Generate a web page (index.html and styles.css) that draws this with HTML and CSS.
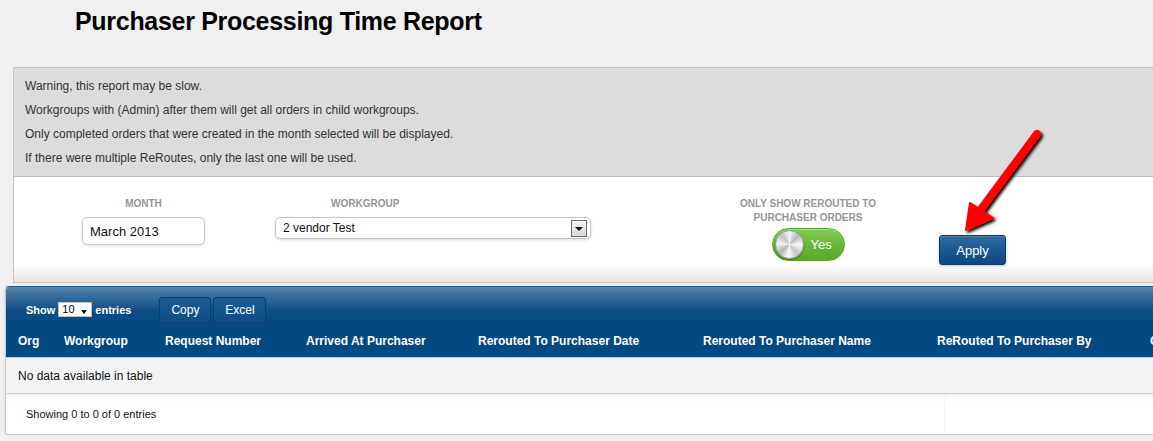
FILE: index.html
```html
<!DOCTYPE html>
<html>
<head>
<meta charset="utf-8">
<title>Purchaser Processing Time Report</title>
<link rel="stylesheet" href="styles.css">
</head>
<body>
<div class="page">
  <h1 class="title">Purchaser Processing Time Report</h1>

  <section class="filter-panel">
    <div class="notes">
      <p>Warning, this report may be slow.</p>
      <p>Workgroups with (Admin) after them will get all orders in child workgroups.</p>
      <p>Only completed orders that were created in the month selected will be displayed.</p>
      <p>If there were multiple ReRoutes, only the last one will be used.</p>
    </div>
    <div class="form-row">
      <div class="group group-month">
        <div class="label">MONTH</div>
        <div class="text-input">March 2013</div>
      </div>
      <div class="group group-workgroup">
        <div class="label">WORKGROUP</div>
        <div class="select-input">
          <span>2 vendor Test</span>
          <span class="select-btn"><span class="tri"></span></span>
        </div>
      </div>
      <div class="group group-reroute">
        <div class="label">ONLY SHOW REROUTED TO<br>PURCHASER ORDERS</div>
        <div class="toggle">
          <span class="knob"></span>
          <span class="toggle-text">Yes</span>
        </div>
      </div>
      <div class="group group-apply">
        <button class="apply">Apply</button>
      </div>
    </div>
  </section>

  <section class="table-panel">
    <div class="toolbar">
      <div class="length">
        <span>Show</span>
        <span class="len-select">10<span class="len-tri"></span></span>
        <span>entries</span>
      </div>
      <div class="buttons">
        <span class="tbtn tbtn-copy">Copy</span>
        <span class="tbtn tbtn-excel">Excel</span>
      </div>
    </div>
    <div class="thead">
      <div class="th c1">Org</div>
      <div class="th c2">Workgroup</div>
      <div class="th c3">Request Number</div>
      <div class="th c4">Arrived At Purchaser</div>
      <div class="th c5">Rerouted To Purchaser Date</div>
      <div class="th c6">Rerouted To Purchaser Name</div>
      <div class="th c7">ReRouted To Purchaser By</div>
      <div class="th c8">Comments</div>
    </div>
    <div class="empty-row">No data available in table</div>
    <div class="tfoot">
      <div class="info">Showing 0 to 0 of 0 entries</div>
      <div class="paging"></div>
    </div>
  </section>
</div>

<svg class="arrow" width="110" height="130" viewBox="950 120 110 130" xmlns="http://www.w3.org/2000/svg">
  <defs>
    <filter id="sh" x="-30%" y="-30%" width="160%" height="160%">
      <feGaussianBlur in="SourceAlpha" stdDeviation="1.5"/>
      <feOffset dx="2" dy="2" result="b"/>
      <feMerge><feMergeNode in="b"/><feMergeNode in="SourceGraphic"/></feMerge>
    </filter>
  </defs>
  <g filter="url(#sh)">
    <line x1="1037" y1="134" x2="982" y2="208" stroke="#ff0000" stroke-width="8" stroke-linecap="round"/>
    <polygon points="966,230 970,203 993,218" fill="#ff0000" stroke="#ff0000" stroke-width="2" stroke-linejoin="round"/>
  </g>
</svg>
</body>
</html>
```

FILE: styles.css
```css
html, body {
  margin: 0;
  padding: 0;
  background: #f0f0f0;
  overflow: hidden;
  font-family: "Liberation Sans", Arial, sans-serif;
}

.page {
  width: 1200px;
}

.title {
  margin: 0 0 30px 75px;
  padding-top: 5px;
  font-size: 25px;
  line-height: 32px;
  font-weight: bold;
  color: #000;
  letter-spacing: -0.3px;
}

.filter-panel {
  margin-left: 13px;
  border: 1px solid #c4c4c4;
  border-right: none;
  background: #fff;
}

.notes {
  background: #dcdcdc;
  border-bottom: 1px solid #bdbdbd;
  padding: 6px 12px 6px 11px;
}

.notes p {
  margin: 0;
  font-size: 12px;
  line-height: 24px;
  color: #333;
}

.form-row {
  display: flex;
  align-items: flex-start;
  height: 105px;
  box-sizing: border-box;
  padding-top: 20px;
  background: linear-gradient(#fff 0, #fff 88px, #e4e4e4 105px);
}

.label {
  font-size: 10px;
  line-height: 14px;
  font-weight: bold;
  color: #959595;
}

.group-month {
  margin-left: 68px;
  width: 123px;
  text-align: center;
}

.text-input {
  margin-top: 6px;
  height: 28px;
  box-sizing: border-box;
  border: 1px solid #c8c8c8;
  border-radius: 5px;
  background: #fff;
  box-shadow: 0 1px 3px rgba(0, 0, 0, 0.12);
  text-align: left;
  padding-left: 7px;
  font-size: 13px;
  line-height: 27px;
  color: #111;
}

.group-workgroup {
  margin-left: 70px;
  width: 316px;
}

.group-workgroup .label {
  padding-left: 56px;
}

.select-input {
  margin-top: 6px;
  height: 22px;
  box-sizing: border-box;
  border: 1px solid #c4c4c4;
  border-radius: 5px;
  background: #fff;
  box-shadow: 0 1px 3px rgba(0, 0, 0, 0.15);
  display: flex;
  align-items: center;
  justify-content: space-between;
  padding: 0 3px 0 7px;
  font-size: 12px;
  color: #111;
}

.select-btn {
  width: 14px;
  height: 15px;
  border: 1px solid #6e6e6e;
  background: linear-gradient(#f4f4f4, #d8d8d8);
  display: flex;
  align-items: center;
  justify-content: center;
}

.tri {
  width: 0;
  height: 0;
  border-left: 4px solid transparent;
  border-right: 4px solid transparent;
  border-top: 4px solid #111;
  margin-top: 2px;
}

.group-reroute {
  margin-left: 144px;
  width: 146px;
  text-align: center;
  display: flex;
  flex-direction: column;
  align-items: center;
}

.toggle {
  margin-top: 3px;
  width: 73px;
  height: 33px;
  box-sizing: border-box;
  border: 1px solid #55a02a;
  border-radius: 17px;
  background: linear-gradient(#86cd52, #67b634 55%, #5aa82a);
  display: flex;
  align-items: center;
  padding-left: 2px;
  box-shadow: inset 0 1px 0 rgba(255, 255, 255, 0.3);
}

.knob {
  width: 27px;
  height: 27px;
  border-radius: 50%;
  background: conic-gradient(#f4f4f4, #b9b9b9 45deg, #f7f7f7 90deg, #c4c4c4 140deg, #fafafa 185deg, #b5b5b5 230deg, #f2f2f2 275deg, #c2c2c2 320deg, #f4f4f4);
  border: 1px solid #9d9d9d;
  box-shadow: 0 1px 2px rgba(0, 0, 0, 0.3);
}

.toggle-text {
  margin-left: 7px;
  color: #fff;
  font-size: 13px;
}

.group-apply {
  margin-left: 58px;
  padding-top: 38px;
}

.apply {
  width: 67px;
  height: 30px;
  border: 1px solid #0b3b6a;
  border-radius: 3px;
  background: linear-gradient(#2d6ba4, #1a5690 55%, #0d4a83);
  color: #fff;
  font-family: "Liberation Sans", Arial, sans-serif;
  font-size: 13px;
  box-shadow: 0 1px 3px rgba(0, 0, 0, 0.25), inset 0 1px 0 rgba(255, 255, 255, 0.15);
  padding: 0;
}

.table-panel {
  margin-top: 3px;
  margin-left: 5px;
  border: 1px solid #c8c8c8;
  border-top-color: #2a5d8a;
  border-right: none;
  border-radius: 4px 0 0 4px;
  overflow: hidden;
  background: #fff;
  box-shadow: 0 1px 3px rgba(0, 0, 0, 0.12);
}

.toolbar {
  height: 37px;
  display: flex;
  align-items: center;
  background: linear-gradient(#5686ae 0, #3c6f9c 8px, #0c4d85 24px, #034a82 37px);
}

.length {
  display: flex;
  align-items: center;
  padding-left: 20px;
  color: #fff;
  font-size: 11px;
  font-weight: bold;
  margin-top: 8px;
}

.len-select {
  margin: 0 3px;
  width: 34px;
  height: 15px;
  box-sizing: border-box;
  background: #fff;
  border: 1px solid #c0c0c0;
  color: #000;
  font-weight: normal;
  font-size: 11px;
  line-height: 13px;
  padding-left: 3px;
  display: flex;
  align-items: center;
  justify-content: space-between;
  padding-right: 4px;
}

.len-tri {
  width: 0;
  height: 0;
  border-left: 3.5px solid transparent;
  border-right: 3.5px solid transparent;
  border-top: 4px solid #000;
  margin-top: 4px;
}

.buttons {
  display: flex;
  gap: 2px;
  margin-left: 28px;
  margin-top: 9px;
}

.tbtn {
  height: 26px;
  box-sizing: border-box;
  border: 1px solid #0b3f70;
  border-radius: 3px;
  background: linear-gradient(#1f5c93, #0e4c84);
  color: #fff;
  font-size: 12px;
  line-height: 24px;
  text-align: center;
}

.tbtn-copy { width: 52px; }
.tbtn-excel { width: 53px; }

.thead {
  display: flex;
  height: 33px;
  align-items: center;
  background: #034a82;
  border-bottom: 1px solid #d0d0d0;
  white-space: nowrap;
}

.th {
  box-sizing: border-box;
  padding-left: 12px;
  color: #fff;
  font-size: 12px;
  font-weight: bold;
  flex: none;
}

.c1 { width: 46px; }
.c2 { width: 101px; }
.c3 { width: 141px; }
.c4 { width: 172px; }
.c5 { width: 225px; }
.c6 { width: 234px; }
.c7 { width: 213px; }
.c8 { width: 100px; }

.empty-row {
  height: 36px;
  box-sizing: border-box;
  background: #f3f3f3;
  border-bottom: 1px solid #cfcfcf;
  padding-left: 12px;
  font-size: 12px;
  line-height: 36px;
  color: #111;
}

.tfoot {
  display: flex;
  height: 40px;
  background: linear-gradient(#f4f4f4 0, #fff 8px);
}

.info {
  width: 939px;
  box-sizing: border-box;
  padding-left: 20px;
  font-size: 11px;
  line-height: 40px;
  color: #111;
  border-right: 1px solid #f2f2f2;
}

.paging {
  flex: 1;
}

.arrow {
  position: absolute;
  left: 950px;
  top: 120px;
}
```
